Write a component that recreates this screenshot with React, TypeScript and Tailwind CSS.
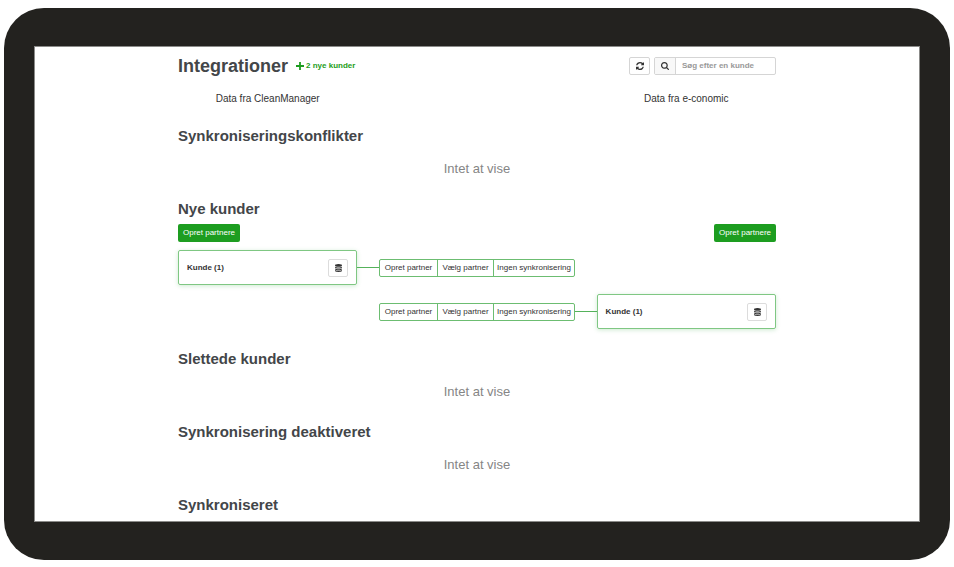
import React from "react";

interface IIcon {
  className: string;
}

interface ISection {
  title: string;
  children?: React.ReactNode;
}

const RefreshIcon: React.FC<IIcon> = ({ className }) => (
  <svg viewBox="0 0 1536 1536" fill="currentColor" className={className} aria-hidden="true">
    <path d="M1511 928q0 5-1 7-64 268-268 434.5t-478 166.5q-146 0-282.5-55t-243.5-157l-129 129q-19 19-45 19t-45-19-19-45v-448q0-26 19-45t45-19h448q26 0 45 19t19 45-19 45l-137 137q71 66 161 102t187 36q134 0 250-65t186-179q11-17 53-117 8-23 30-23h192q13 0 22.5 9.5t9.5 22.5zm25-800v448q0 26-19 45t-45 19h-448q-26 0-45-19t-19-45 19-45l138-138q-148-137-349-137-134 0-250 65t-186 179q-11 17-53 117-8 23-30 23h-199q-13 0-22.5-9.5t-9.5-22.5v-7q65-268 270-434.5t480-166.5q146 0 284 55.5t245 156.5l130-129q19-19 45-19t45 19 19 45z" />
  </svg>
);

const SearchIcon: React.FC<IIcon> = ({ className }) => (
  <svg viewBox="0 128 1664 1664" fill="currentColor" className={className} aria-hidden="true">
    <path d="M1152 832q0-185-131.5-316.5t-316.5-131.5-316.5 131.5-131.5 316.5 131.5 316.5 316.5 131.5 316.5-131.5 131.5-316.5zm512 832q0 52-38 90t-90 38q-54 0-90-38l-343-342q-179 124-399 124-143 0-273.5-55.5t-225-150-150-225-55.5-273.5 55.5-273.5 150-225 225-150 273.5-55.5 273.5 55.5 225 150 150 225 55.5 273.5q0 220-124 399l343 343q37 37 37 90z" />
  </svg>
);

const DatabaseIcon: React.FC<IIcon> = ({ className }) => (
  <svg viewBox="0 0 1536 1792" fill="currentColor" className={className} aria-hidden="true">
    <path d="M768 768q237 0 443-43t325-127v170q0 69-103 128t-280 93.5-385 34.5-385-34.5-280-93.5-103-128v-170q119 84 325 127t443 43zm0 768q237 0 443-43t325-127v170q0 69-103 128t-280 93.5-385 34.5-385-34.5-280-93.5-103-128v-170q119 84 325 127t443 43zm0-384q237 0 443-43t325-127v170q0 69-103 128t-280 93.5-385 34.5-385-34.5-280-93.5-103-128v-170q119 84 325 127t443 43zm0-1152q208 0 385 34.5t280 93.5 103 128v128q0 69-103 128t-280 93.5-385 34.5-385-34.5-280-93.5-103-128v-128q0-69 103-128t280-93.5 385-34.5z" />
  </svg>
);

const PlusIcon: React.FC<IIcon> = ({ className }) => (
  <svg viewBox="0 0 8 8" fill="none" stroke="currentColor" strokeWidth="1.8" className={className} aria-hidden="true">
    <path d="M4 0v8M0 4h8" />
  </svg>
);

const Section: React.FC<ISection> = ({ title, children }) => (
  <section>
    <h2 className="text-[15px] leading-5 font-bold text-[#434649]">{title}</h2>
    {children}
  </section>
);

const Empty: React.FC = () => (
  <p className="mt-[13px] text-center text-[13px] leading-5 text-[#858585]">Intet at vise</p>
);

const CreateButton: React.FC = () => (
  <button className="h-[18px] w-[62px] rounded-[2px] bg-[#1d9d20] text-[8px] whitespace-nowrap text-white">
    Opret partnere
  </button>
);

const CustomerCard: React.FC = () => (
  <div className="flex h-[35px] items-center justify-between rounded-[2px] border border-[#7fc783] px-2 shadow-[0_1px_4px_rgba(60,170,70,0.25)]">
    <span className="text-[8px] font-bold">Kunde (1)</span>
    <button aria-label="Vis data" className="flex h-[18px] w-5 items-center justify-center rounded-[2px] border border-[#dcdcdc]">
      <DatabaseIcon className="h-2 w-[7px]" />
    </button>
  </div>
);

const Connector: React.FC = () => <div className="h-px bg-[#55b25b]" />;

const PartnerActions: React.FC = () => (
  <div className="grid h-[18px] grid-cols-[58px_56px_1fr] divide-x divide-[#6cbd71] rounded-[2px] border border-[#6cbd71] text-[8px] whitespace-nowrap">
    <button className="border-[#6cbd71]">Opret partner</button>
    <button className="border-[#6cbd71]">Vælg partner</button>
    <button>Ingen synkronisering</button>
  </div>
);

const App: React.FC = () => {
  return (
    <div className="bg-white px-1 pt-2 pb-[7px] font-['Liberation_Sans',Arial,sans-serif] text-[#333]">
      <div className="rounded-[40px] bg-[#23221f] px-[30px] py-[38px]">
        <main className="border border-[#8b8b89] bg-white pt-[10px] pb-[6px]">
          <div className="mx-auto max-w-[598px]">
            <header className="flex h-[18px] items-center justify-between">
              <div className="flex items-center gap-2">
                <h1 className="text-[18px] leading-[18px] font-bold text-[#434649]">Integrationer</h1>
                <p className="flex items-center gap-[2px] text-[8px] font-bold text-[#1d9d20]">
                  <PlusIcon className="size-2" />2 nye kunder
                </p>
              </div>
              <div className="flex gap-1">
                <button aria-label="Opdater" className="flex h-[18px] w-[21px] items-center justify-center rounded-[2px] border border-[#d5d5d5]">
                  <RefreshIcon className="size-2" />
                </button>
                <label className="flex h-[18px] w-[122px] overflow-hidden rounded-[2px] border border-[#d5d5d5]">
                  <span className="flex w-[21px] shrink-0 items-center justify-center border-r border-[#d5d5d5] bg-[#f8f8f8]">
                    <SearchIcon className="size-2" />
                  </span>
                  <input
                    type="text"
                    aria-label="Søg efter en kunde"
                    placeholder="Søg efter en kunde"
                    className="w-full min-w-0 px-[6px] text-[8px] font-bold outline-none placeholder:text-[#999]"
                  />
                </label>
              </div>
            </header>

            <div className="mt-4 mb-[19px] flex justify-between text-center text-[10px] leading-4">
              <p className="w-[30%]">Data fra CleanManager</p>
              <p className="w-[30%]">Data fra e-conomic</p>
            </div>

            <div className="flex flex-col gap-5">
              <Section title="Synkroniseringskonflikter">
                <Empty />
              </Section>
              <Section title="Nye kunder">
                <div className="mt-[5px] flex justify-between">
                  <CreateButton />
                  <CreateButton />
                </div>
                <div className="mt-2 grid grid-cols-[30%_1fr_196px_1fr_30%] items-center gap-y-[9px]">
                  <CustomerCard />
                  <Connector />
                  <PartnerActions />
                  <div className="col-span-2" />
                  <div className="col-span-2" />
                  <PartnerActions />
                  <Connector />
                  <CustomerCard />
                </div>
              </Section>
              <Section title="Slettede kunder">
                <Empty />
              </Section>
              <Section title="Synkronisering deaktiveret">
                <Empty />
              </Section>
              <Section title="Synkroniseret" />
            </div>
          </div>
        </main>
      </div>
    </div>
  );
};

export default App;
